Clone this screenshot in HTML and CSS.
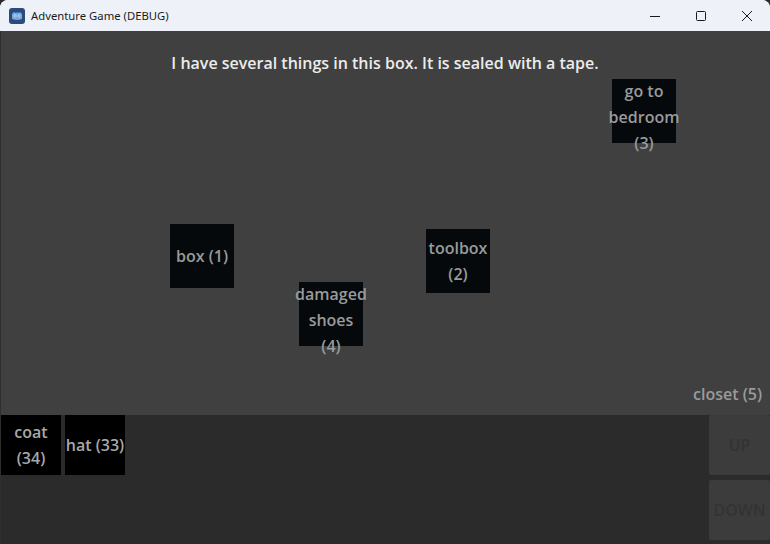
FILE: index.html
```html
<!DOCTYPE html>
<html>
<head>
<meta charset="utf-8">
<link rel="stylesheet" href="styles.css">
</head>
<body>
<div class="window">
  <div class="titlebar">
    <svg class="appicon" width="16" height="16" viewBox="0 0 16 16">
      <rect x="0" y="0" width="16" height="16" rx="3" fill="#2c4a7a"/>
      <path d="M3 6 L5 4 L7 5 L8 4 L9 5 L11 4 L13 6 L13 11 Q8 13 3 11 Z" fill="#6aa8e8"/>
      <circle cx="6" cy="8" r="1.4" fill="#fff"/>
      <circle cx="10" cy="8" r="1.4" fill="#fff"/>
      <circle cx="6" cy="8" r="0.7" fill="#333"/>
      <circle cx="10" cy="8" r="0.7" fill="#333"/>
    </svg>
    <span class="title">Adventure Game (DEBUG)</span>
    <div class="controls">
      <svg width="46" height="30" viewBox="0 0 46 30"><path d="M18 15.5 H28" stroke="#1a1a1a" stroke-width="1"/></svg>
      <svg width="46" height="30" viewBox="0 0 46 30"><rect x="18.5" y="10.5" width="9" height="9" rx="1" fill="none" stroke="#1a1a1a" stroke-width="1"/></svg>
      <svg width="46" height="30" viewBox="0 0 46 30"><path d="M18 10 L28 20 M28 10 L18 20" stroke="#1a1a1a" stroke-width="1"/></svg>
    </div>
  </div>
  <div class="game">
    <div class="scene">
      <p class="narration">I have several things in this box. It is sealed with a tape.</p>
      <div class="item" style="left:169px;top:193px;"><span>box (1)</span></div>
      <div class="item" style="left:425px;top:198px;"><span>toolbox<br>(2)</span></div>
      <div class="item tall" style="left:298px;top:251px;"><span>damaged<br>shoes<br>(4)</span></div>
      <div class="item tall" style="left:611px;top:48px;"><span>go to<br>bedroom<br>(3)</span></div>
      <div class="closet">closet (5)</div>
    </div>
    <div class="bottom">
      <div class="inventory">
        <div class="inv"><span>coat<br>(34)</span></div>
        <div class="inv"><span>hat (33)</span></div>
      </div>
      <div class="buttons">
        <div class="btn">UP</div>
        <div class="btn">DOWN</div>
      </div>
    </div>
  </div>
</div>
</body>
</html>
```
FILE: styles.css
```css
html, body {
  margin: 0;
  padding: 0;
  background: #2a2a2a;
}
.window {
  width: 770px;
  height: 544px;
  display: flex;
  flex-direction: column;
  overflow: hidden;
  border-radius: 8px 8px 0 0;
  background: #eef2f8;
}
.titlebar {
  height: 31px;
  display: flex;
  align-items: center;
  background: #eef2f8;
  font-family: "Noto Sans", "Liberation Sans", sans-serif;
  font-size: 11.3px;
  color: #1a1a1a;
}
.appicon {
  margin-left: 9px;
}
.title {
  margin-left: 6px;
}
.controls {
  margin-left: auto;
  display: flex;
}
.controls svg {
  display: block;
}
.game {
  flex: 1;
  display: flex;
  flex-direction: column;
  border-left: 1px solid #2f2f2f;
  background: #404040;
  font-family: "Open Sans", "Noto Sans", sans-serif;
  font-weight: 600;
}
.scene {
  position: relative;
  height: 384px;
}
.narration {
  margin: 0;
  padding-top: 21px;
  text-align: center;
  font-size: 16px;
  color: #ececec;
  line-height: 22px;
  padding-right: 1px;
}
.item {
  position: absolute;
  width: 64px;
  height: 64px;
  background: #05090c;
  display: flex;
  align-items: center;
  justify-content: center;
}
.item.tall {
  align-items: flex-start;
}
.item.tall span {
  margin-top: -1px;
}
.item span {
  white-space: nowrap;
  text-align: center;
  font-size: 16px;
  line-height: 26px;
  color: #9a9a9a;
}
.closet {
  position: absolute;
  right: 8px;
  bottom: 10px;
  font-size: 16px;
  line-height: 22px;
  color: #9a9a9a;
}
.bottom {
  flex: 1;
  display: flex;
  background: #2b2b2b;
}
.inventory {
  flex: 1;
  display: flex;
  gap: 4px;
  align-items: flex-start;
}
.inv {
  width: 60px;
  height: 60px;
  background: #000;
  display: flex;
  align-items: center;
  justify-content: center;
}
.inv span {
  white-space: nowrap;
  text-align: center;
  font-size: 16px;
  line-height: 26px;
  color: #a8a8a8;
}
.buttons {
  width: 61px;
  display: flex;
  flex-direction: column;
  gap: 5px;
}
.btn {
  height: 60px;
  background: #3c3c3c;
  display: flex;
  align-items: center;
  justify-content: center;
  font-size: 16px;
  color: #333;
  border-radius: 2px;
}
```
